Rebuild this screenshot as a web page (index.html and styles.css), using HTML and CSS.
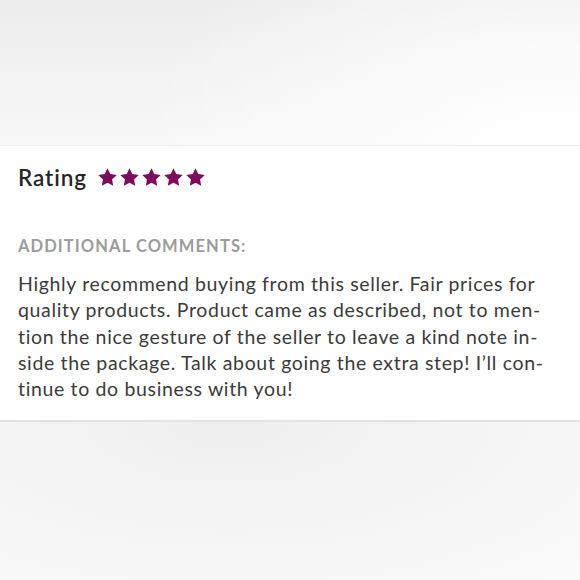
FILE: index.html
```html
<!DOCTYPE html>
<html lang="en">
<head>
<meta charset="utf-8">
<link rel="stylesheet" href="styles.css">
</head>
<body>
<div class="page">
  <div class="backdrop backdrop-top"></div>
  <section class="card">
    <div class="rating-row">
      <span class="rating-label">Rating</span>
      <span class="stars">
        <svg class="star" viewBox="0 0 24 24"><path d="M12 1.5l3.2 6.6 7.3 1-5.3 5.1 1.3 7.3L12 18l-6.5 3.5 1.3-7.3-5.3-5.1 7.3-1z"/></svg>
        <svg class="star" viewBox="0 0 24 24"><path d="M12 1.5l3.2 6.6 7.3 1-5.3 5.1 1.3 7.3L12 18l-6.5 3.5 1.3-7.3-5.3-5.1 7.3-1z"/></svg>
        <svg class="star" viewBox="0 0 24 24"><path d="M12 1.5l3.2 6.6 7.3 1-5.3 5.1 1.3 7.3L12 18l-6.5 3.5 1.3-7.3-5.3-5.1 7.3-1z"/></svg>
        <svg class="star" viewBox="0 0 24 24"><path d="M12 1.5l3.2 6.6 7.3 1-5.3 5.1 1.3 7.3L12 18l-6.5 3.5 1.3-7.3-5.3-5.1 7.3-1z"/></svg>
        <svg class="star" viewBox="0 0 24 24"><path d="M12 1.5l3.2 6.6 7.3 1-5.3 5.1 1.3 7.3L12 18l-6.5 3.5 1.3-7.3-5.3-5.1 7.3-1z"/></svg>
      </span>
    </div>
    <h2 class="comments-title">ADDITIONAL COMMENTS:</h2>
    <p class="comments-body">Highly recommend buying from this seller. Fair prices for quality products. Product came as described, not to men&shy;tion the nice gesture of the seller to leave a kind note in&shy;side the package. Talk about going the extra step! I’ll con&shy;tinue to do business with you!</p>
  </section>
  <div class="backdrop backdrop-bottom"></div>
</div>
</body>
</html>
```
FILE: styles.css
```css
html, body {
  margin: 0;
  padding: 0;
  background: #fafafa;
}
.page {
  width: 580px;
  height: 580px;
  display: flex;
  flex-direction: column;
  overflow: hidden;
  font-family: Lato, "Open Sans", sans-serif;
}
.backdrop-top {
  height: 145px;
  flex: none;
  background:
    radial-gradient(ellipse 420px 260px at 560px 150px, #ffffff 0%, rgba(255,255,255,0.6) 45%, rgba(255,255,255,0) 100%),
    linear-gradient(180deg, #eeeded 0%, #f4f3f3 60%, #f9f8f8 100%);
  border-bottom: 1px solid #ececec;
}
.card {
  flex: none;
  background: #ffffff;
  border-bottom: 2px solid #e2e2e2;
  padding: 0 18px;
  box-sizing: border-box;
  height: 276px;
}
.rating-row {
  display: flex;
  align-items: center;
  gap: 10px;
  padding-top: 17px;
  height: 28px;
}
.rating-label {
  font-size: 22.5px;
  font-weight: 600;
  color: #262626;
  letter-spacing: 0.9px;
}
.stars {
  display: flex;
  gap: 1px;
}
.star {
  width: 21px;
  height: 21px;
  fill: #7b0e5c;
}
.comments-title {
  margin: 45px 0 0;
  font-size: 16.5px;
  font-weight: 700;
  color: #9c9c9c;
  letter-spacing: 1.1px;
  line-height: 20px;
}
.comments-body {
  margin: 15px 0 0;
  width: 545px;
  font-size: 19.5px;
  line-height: 26.3px;
  color: #3b3b3b;
  letter-spacing: 0.65px;
}
.backdrop-bottom {
  flex: 1;
  background:
    radial-gradient(ellipse 520px 220px at 230px 0px, #efefef 0%, rgba(240,240,240,0.4) 60%, rgba(250,250,250,0) 100%),
    #fafafa;
}
```
